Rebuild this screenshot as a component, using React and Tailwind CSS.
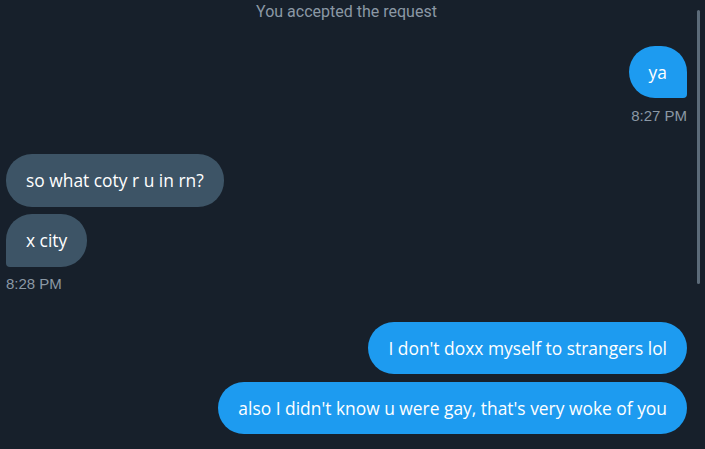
import React from "react";

function Bubble({ children, side, corner, className = "" }) {
  const bg = side === "right" ? "bg-[#1d9bf0]" : "bg-[#3d5466]";
  return (
    <div
      className={`h-[52px] flex items-center px-5 text-white text-[17.4px] ${bg} ${corner} ${className} font-['Open_Sans',sans-serif]`}
    >
      {children}
    </div>
  );
}

export default function App() {
  return (
    <div className="relative w-[705px] h-[449px] overflow-hidden bg-[#17202b]">
      <div className="absolute right-[5px] top-[10px] w-[3px] h-[274px] rounded-full bg-[#5c6b79]" />
      <div className="flex flex-col pl-[6px] pr-[18px]">
        <div className="h-[24px] flex items-center justify-center text-[16px] text-[#8b98a5] font-['Roboto',sans-serif]">
          You accepted the request
        </div>
        <div className="mt-[22px] flex justify-end">
          <Bubble side="right" corner="rounded-[26px] rounded-br-[4px]">ya</Bubble>
        </div>
        <div className="mt-[8px] h-[20px] flex items-center justify-end text-[15px] text-[#8b98a5] font-['Liberation_Sans',Arial,sans-serif]">
          8:27 PM
        </div>
        <div className="mt-[28px] flex justify-start">
          <Bubble side="left" corner="rounded-[26px] h-[53px]">so what coty r u in rn?</Bubble>
        </div>
        <div className="mt-[7px] flex justify-start">
          <Bubble side="left" corner="rounded-[26px] rounded-bl-[4px] h-[53px]">x city</Bubble>
        </div>
        <div className="mt-[7px] h-[20px] flex items-center justify-start text-[15px] text-[#8b98a5] font-['Liberation_Sans',Arial,sans-serif]">
          8:28 PM
        </div>
        <div className="mt-[28px] flex justify-end">
          <Bubble side="right" corner="rounded-[26px]">I don't doxx myself to strangers lol</Bubble>
        </div>
        <div className="mt-[8px] flex justify-end">
          <Bubble side="right" corner="rounded-[26px]">also I didn't know u were gay, that's very woke of you</Bubble>
        </div>
      </div>
    </div>
  );
}
